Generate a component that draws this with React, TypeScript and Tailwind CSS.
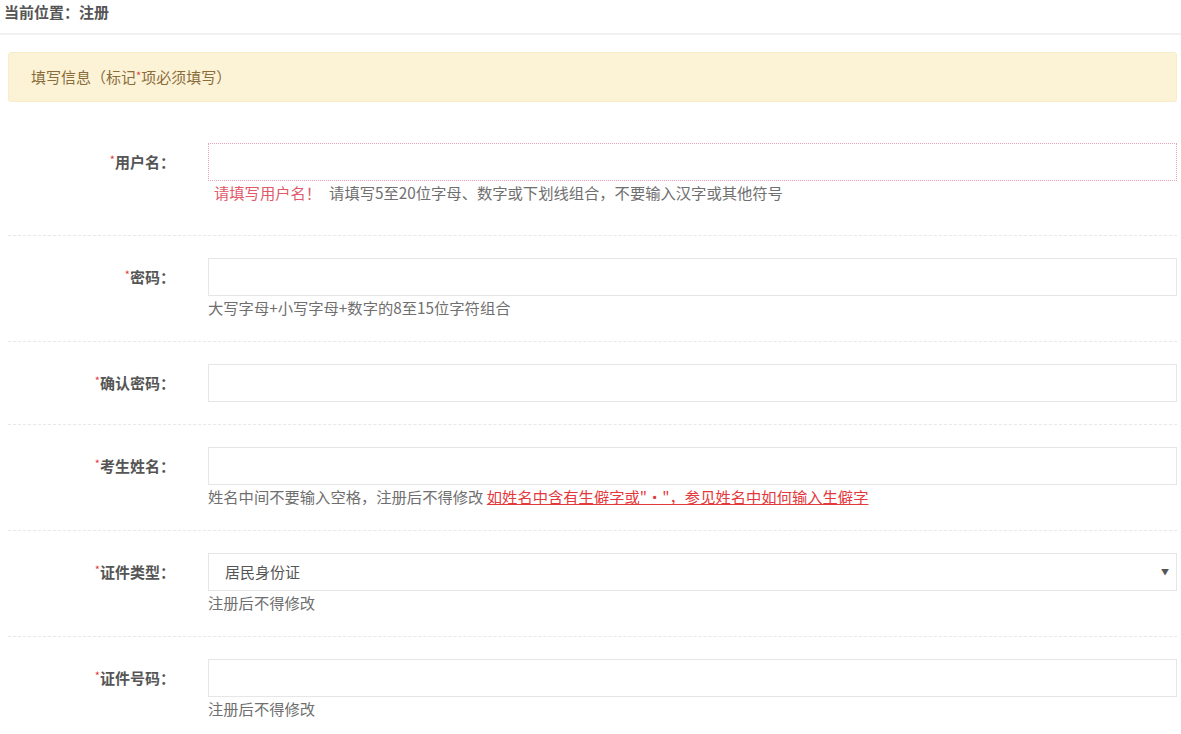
import React from 'react';

const font = { fontFamily: '"Noto Sans CJK SC", "Noto Sans", sans-serif' };

type RowProps = {
  label: string;
  children: React.ReactNode;
  help?: React.ReactNode;
  last?: boolean;
  extra?: boolean;
};

function Row({ label, children, help, last, extra }: RowProps) {
  return (
    <div
      className={
        'flex pt-[22px] ' +
        (extra ? 'pb-[31px] ' : 'pb-[22px] ') +
        (last ? '' : 'border-b border-dashed border-[#e8e8e8]')
      }
    >
      <div className="w-[167px] shrink-0 h-[38px] flex items-center justify-end text-[15px] font-bold text-[#555]">
        <span className="text-[#e4393c] text-[11px] font-normal self-start mt-[8px]">*</span>
        {label}：
      </div>
      <div className="ml-[33px] flex-1 min-w-0">
        {children}
        {help && <div className="h-[23px] leading-[23px] text-[15.3px] text-[#6f6f6f] whitespace-nowrap">{help}</div>}
      </div>
    </div>
  );
}

export default function App() {
  const inputCls = 'block w-full h-[38px] border border-[#e6e6e6] bg-white px-3 text-[15px] outline-none';

  return (
    <div className="min-h-screen bg-white" style={font}>
      {/* Breadcrumb */}
      <div className="h-[35px] border-b-2 border-[#f1f1f1] pl-[4px] pt-[1px] text-[15px] font-bold text-[#555] leading-[22px]">
        当前位置：注册
      </div>

      <div className="pl-[8px] pr-[4px] pt-[17px]">
        {/* Notice */}
        <div className="h-[50px] rounded-[3px] bg-[#fcf3d7] border border-[#f8ecc8] flex items-center pl-[22px] text-[15px] text-[#8a6d3b] mb-[19px]">
          填写信息（标记<span className="text-[#e4393c] text-[11px] self-start mt-[14px]">*</span>项必须填写）
        </div>

        {/* Form */}
        <Row
          label="用户名"
          extra
          help={
            <>
              <span className="text-[#e05a6a] ml-[6px] mr-[8px]">请填写用户名！</span>
              请填写5至20位字母、数字或下划线组合，不要输入汉字或其他符号
            </>
          }
        >
          <input className="block w-full h-[38px] border border-dotted border-[#e3a3b0] bg-white px-3 text-[15px] outline-none" />
        </Row>

        <Row label="密码" help="大写字母+小写字母+数字的8至15位字符组合">
          <input type="password" className={inputCls} />
        </Row>

        <Row label="确认密码">
          <input type="password" className={inputCls} />
        </Row>

        <Row
          label="考生姓名"
          help={
            <>
              姓名中间不要输入空格，注册后不得修改{' '}
              <a href="#" className="text-[#e4393c] underline">
                如姓名中含有生僻字或"·"，参见姓名中如何输入生僻字
              </a>
            </>
          }
        >
          <input className={inputCls} />
        </Row>

        <Row label="证件类型" help="注册后不得修改">
          <div className="relative">
            <select className="block w-full h-[38px] border border-[#e6e6e6] bg-white pl-[16px] text-[15px] text-[#555] outline-none appearance-none">
              <option>居民身份证</option>
              <option>护照</option>
              <option>港澳居民来往内地通行证</option>
              <option>台湾居民来往大陆通行证</option>
            </select>
            <span className="pointer-events-none absolute right-[8px] top-[13px] text-[8px] text-[#555]">▼</span>
          </div>
        </Row>

        <Row label="证件号码" help="注册后不得修改" last>
          <input className={inputCls} />
        </Row>
      </div>
    </div>
  );
}
